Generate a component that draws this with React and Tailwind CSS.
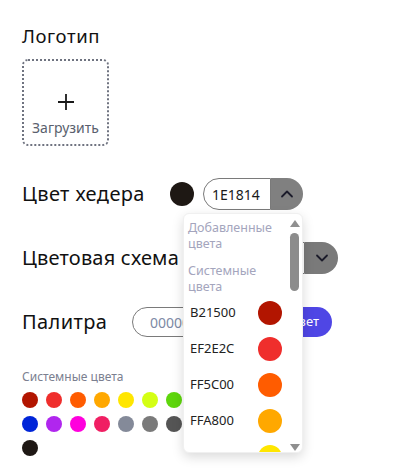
import React from 'react';

const systemColors = [
  'B21500', 'EF2E2C', 'FF5C00', 'FFA800', 'FFE600', 'D4FF14', '5ED60C',
  '0025D8', 'B026EE', 'FF00DD', 'F01F63', '848A99', '7A7A7A', '555555',
  '1E1814',
];

const ChevronUp = () => (
  <svg width="14" height="14" viewBox="0 0 14 14" fill="none">
    <path d="M2 9.5L7 4.5L12 9.5" stroke="#1b1b2a" strokeWidth="1.8" strokeLinecap="round" strokeLinejoin="round" />
  </svg>
);

const ChevronDown = () => (
  <svg width="14" height="14" viewBox="0 0 14 14" fill="none">
    <path d="M2 4.5L7 9.5L12 4.5" stroke="#1b1b2a" strokeWidth="1.8" strokeLinecap="round" strokeLinejoin="round" />
  </svg>
);

const App = () => {
  return (
    <div className="relative min-h-[476px] bg-white px-[22px] pt-[24px] text-[#111] font-['Noto_Sans',sans-serif]">
      <h2 className="text-[18.5px] leading-[24px] tracking-[0.6px]">Логотип</h2>

      <button className="mt-[11px] flex h-[87px] w-[87px] flex-col items-center rounded-md border-2 border-dotted border-[#6f7380] pt-[33px]">
        <svg width="16" height="16" viewBox="0 0 16 16" fill="none">
          <path d="M8 0V16M0 8H16" stroke="#1a1a1a" strokeWidth="1.8" />
        </svg>
        <span className="mt-[9px] text-[14px] leading-[18px] text-[#5a5f6e]">Загрузить</span>
      </button>

      <div className="mt-[32px] flex h-8 items-center">
        <span className="w-[148px] text-[20px] leading-[28px] tracking-[0.4px]">Цвет хедера</span>
        <span className="h-6 w-6 rounded-full bg-[#1e1814]"></span>
        <div className="ml-[9px] flex h-8">
          <div className="flex w-[68px] items-center rounded-l-full border border-[#7a7a7a] pl-[8px] text-[14px] text-[#1a1a1a]">
            1E1814
          </div>
          <div className="flex w-[32px] items-center justify-center rounded-r-full bg-[#808080]">
            <ChevronUp />
          </div>
        </div>
      </div>

      <div className="mt-[32px] flex h-8 items-center">
        <span className="w-[181px] text-[20px] leading-[28px] tracking-[0.2px]">Цветовая схема</span>
        <div className="flex h-8">
          <div className="w-[102px] rounded-l-full border border-[#7a7a7a]"></div>
          <div className="flex w-[33px] items-center justify-center rounded-r-full bg-[#7a7a7a]">
            <ChevronDown />
          </div>
        </div>
      </div>

      <div className="mt-[33px] flex h-[30px] items-center">
        <span className="w-[110px] text-[20px] leading-[28px] tracking-[0.4px]">Палитра</span>
        <div className="flex h-[30px]">
          <div className="flex w-[86px] items-center rounded-l-full border border-[#7a7a7a] pl-[17px] text-[14px] text-[#7d8aa5]">
            000000
          </div>
          <button className="flex w-[114px] items-center justify-end rounded-r-full bg-[#4f46e5] pr-[13px] text-[13px] text-white">
            Добавить цвет
          </button>
        </div>
      </div>

      <p className="mt-[32px] text-[12px] leading-[16px] text-[#7b8090]">Системные цвета</p>
      <div className="mt-[7px] flex w-[160px] flex-wrap gap-2">
        {systemColors.map((c) => (
          <span key={c} className="h-4 w-4 rounded-full" style={{ backgroundColor: `#${c}` }}></span>
        ))}
      </div>

      <div className="absolute left-[183px] top-[213px] h-[240px] w-[120px] overflow-hidden rounded-md border border-[#f0f0f0] bg-white shadow-[0_4px_12px_rgba(0,0,0,0.15)]">
        <div className="pl-[4px] pr-[12px] pt-[6px]">
          <p className="text-[12.5px] leading-[16px] text-[#a4a5bd]">Добавленные цвета</p>
          <p className="mt-[11px] text-[12.5px] leading-[16px] text-[#a4a5bd]">Системные цвета</p>
          <div className="pl-[2px]">
            {systemColors.slice(0, 5).map((c) => (
              <div key={c} className="flex h-9 items-center justify-between pr-[8px]">
                <span className="text-[13px] text-[#222]">{c}</span>
                <span className="h-6 w-6 rounded-full" style={{ backgroundColor: `#${c}` }}></span>
              </div>
            ))}
          </div>
        </div>

        <svg className="absolute right-[2px] top-[6px]" width="10" height="7" viewBox="0 0 10 7">
          <path d="M5 0L10 7H0Z" fill="#8f8f8f" />
        </svg>
        <div className="absolute right-[3px] top-[19px] h-[58px] w-[9px] rounded-full bg-[#8c8c8c]"></div>
        <svg className="absolute right-[2px] top-[230px]" width="10" height="7" viewBox="0 0 10 7">
          <path d="M0 0H10L5 7Z" fill="#8f8f8f" />
        </svg>
      </div>
    </div>
  );
};

export default App;
